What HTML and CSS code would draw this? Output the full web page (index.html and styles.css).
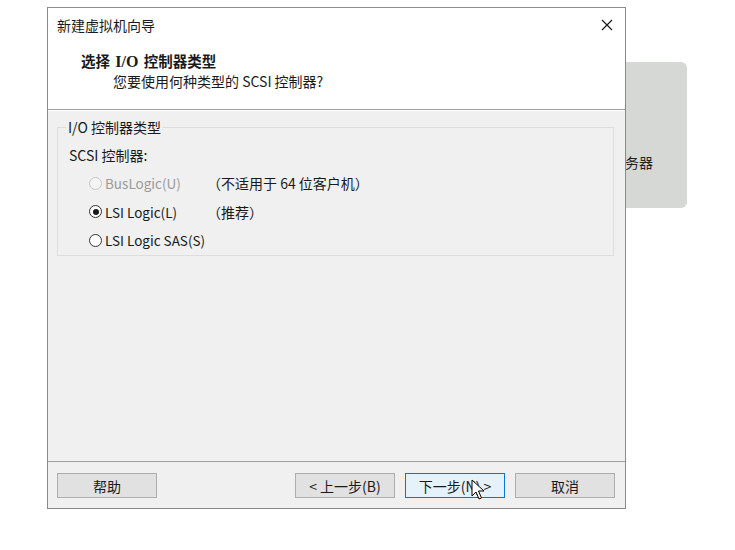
FILE: index.html
```html
<!DOCTYPE html>
<html lang="zh-CN">
<head>
    <meta charset="utf-8">
    <link rel="stylesheet" href="styles.css">
    <title>新建虚拟机向导</title>
</head>
<body>
    <div class="desktop">
        <div class="back-panel">服务器</div>

        <div class="dialog">
            <div class="titlebar">
                <span class="title">新建虚拟机向导</span>
                <span class="close">
                    <svg width="12" height="12" viewBox="0 0 12 12">
                        <path d="M1 1 L11 11 M11 1 L1 11" stroke="#1a1a1a" stroke-width="1.2" fill="none"/>
                    </svg>
                </span>
            </div>
            <div class="header">
                <div class="heading">选择 <span class="serif">I/O</span> 控制器类型</div>
                <div class="subheading">您要使用何种类型的 SCSI 控制器?</div>
            </div>

            <div class="content">
                <fieldset class="group">
                    <legend>I/O 控制器类型</legend>
                    <div class="group-label">SCSI 控制器:</div>
                    <div class="option disabled">
                        <span class="radio"></span>
                        <span class="option-name">BusLogic(U)</span>
                        <span class="option-note">（不适用于 64 位客户机）</span>
                    </div>
                    <div class="option">
                        <span class="radio checked"></span>
                        <span class="option-name">LSI Logic(L)</span>
                        <span class="option-note">（推荐）</span>
                    </div>
                    <div class="option">
                        <span class="radio"></span>
                        <span class="option-name">LSI Logic SAS(S)</span>
                    </div>
                </fieldset>
            </div>

            <div class="footer">
                <button class="btn">帮助</button>
                <div class="spacer"></div>
                <button class="btn">&lt; 上一步(B)</button>
                <button class="btn default">下一步(N) &gt;</button>
                <button class="btn">取消</button>
            </div>
        </div>

        <svg class="cursor" width="14" height="22" viewBox="0 0 14 22">
            <path d="M1 1 L1 17 L5 13 L8 20 L10.5 19 L7.5 12 L13 12 Z" fill="#fff" stroke="#000" stroke-width="1" stroke-linejoin="round"/>
        </svg>
    </div>
</body>
</html>
```

FILE: styles.css
```css
body {
    margin: 0;
    background-color: #fff;
    font-family: "Noto Sans CJK SC", "Liberation Sans", sans-serif;
    font-size: 14px;
    color: #1a1a1a;
}

.desktop {
    position: relative;
    width: 735px;
    height: 550px;
    overflow: hidden;
}

.back-panel {
    position: absolute;
    left: 560px;
    top: 62px;
    width: 127px;
    height: 146px;
    background-color: #d6d8d6;
    border-radius: 6px;
    box-sizing: border-box;
    padding: 90px 0 0 51px;
    font-size: 14px;
    line-height: 20px;
    color: #222;
}

.dialog {
    position: absolute;
    left: 47px;
    top: 7px;
    width: 579px;
    height: 502px;
    box-sizing: border-box;
    border: 1px solid #8a8a8a;
    background-color: #eff0ef;
    display: flex;
    flex-direction: column;
}

.titlebar {
    height: 34px;
    display: flex;
    align-items: center;
    justify-content: space-between;
    padding: 0 12px 0 9px;
    background-color: #fff;
    font-size: 14px;
}

.close {
    display: flex;
}

.header {
    background-color: #fff;
    padding: 9px 0 18px 0;
    border-bottom: 1px solid #a0a0a0;
    box-shadow: 0 1px 0 #fff;
}

.heading {
    padding-left: 33px;
    line-height: 20px;
    font-weight: bold;
    font-size: 14.5px;
    word-spacing: 2px;
}

.serif {
    font-family: "Liberation Serif", serif;
    font-size: 16px;
}

.subheading {
    padding-left: 65px;
    line-height: 19px;
    font-size: 14px;
}

.content {
    flex: 1;
    padding: 8px 11px 0 9px;
}

.group {
    margin: 0;
    padding: 9px 0 0 11px;
    border: 1px solid #dcdddc;
    height: 138px;
    box-sizing: border-box;
}

.group legend {
    padding: 0 2px;
    margin-left: -3px;
    line-height: 18px;
}

.group-label {
    line-height: 20px;
    margin-bottom: 4px;
}

.option {
    display: flex;
    align-items: center;
    height: 28.5px;
    padding-left: 20px;
    font-size: 13.5px;
}

.radio {
    width: 11px;
    height: 11px;
    border: 1px solid #333;
    border-radius: 50%;
    background-color: #fff;
    margin-right: 3px;
    position: relative;
}

.radio.checked::after {
    content: "";
    position: absolute;
    left: 2.5px;
    top: 2.5px;
    width: 6px;
    height: 6px;
    border-radius: 50%;
    background-color: #1a1a1a;
}

.option-name {
    width: 102px;
}

.option-note {
    font-size: 14px;
}

.disabled {
    color: #9a9a9a;
}

.disabled .radio {
    border-color: #c8c8c8;
    background-color: #f4f4f4;
}

.disabled .option-note {
    color: #1a1a1a;
}

.footer {
    height: 45px;
    border-top: 1px solid #a0a0a0;
    display: flex;
    align-items: center;
    padding: 1px 10px 0 9px;
}

.spacer {
    flex: 1;
}

.btn {
    width: 100px;
    height: 25px;
    margin-left: 10px;
    border: 1px solid #adadad;
    background-color: #e1e1e1;
    font-family: "Noto Sans CJK SC", "Liberation Sans", sans-serif;
    font-size: 14px;
    color: #1a1a1a;
    padding: 0;
}

.btn:first-child {
    margin-left: 0;
}

.btn.default {
    border-color: #0078d7;
    background-color: #e5f1fb;
}

.cursor {
    position: absolute;
    left: 471px;
    top: 479px;
}
```
